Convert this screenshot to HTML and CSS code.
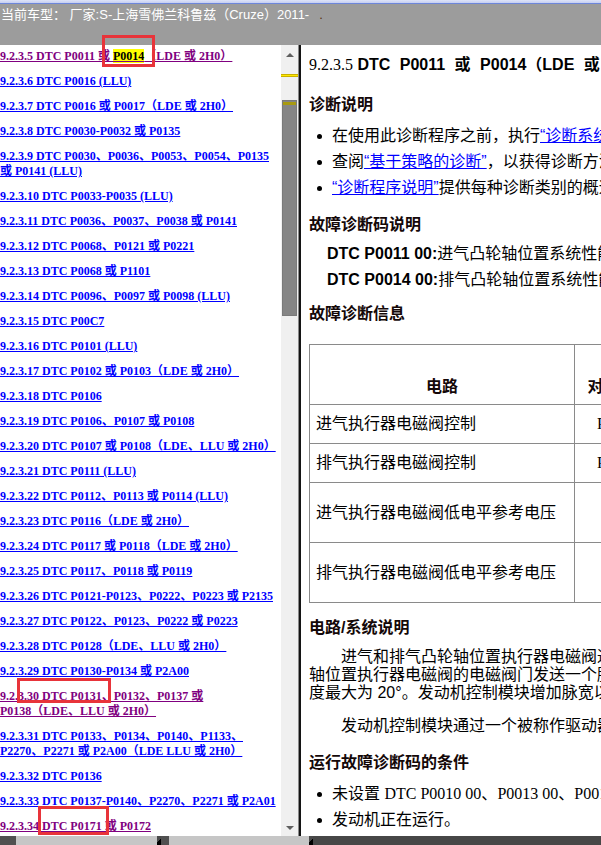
FILE: index.html
```html
<!DOCTYPE html>
<html lang="zh-CN">
<head>
<meta charset="utf-8">
<title>科鲁兹维修手册</title>
<link rel="stylesheet" href="styles.css">
</head>
<body>
<div class="topstrip"></div>
<div class="header">当前车型： 厂家:S-上海雪佛兰科鲁兹（Cruze）2011-<span class="hdot">.</span></div>
<div class="main">
  <div class="left">
    <p class="toc"><a href="#" class="visited">9.2.3.5 DTC P0011 或 <span class="hl">P0014</span>（LDE 或 2H0）</a></p>
    <p class="toc"><a href="#">9.2.3.6 DTC P0016 (LLU)</a></p>
    <p class="toc"><a href="#">9.2.3.7 DTC P0016 或 P0017（LDE 或 2H0）</a></p>
    <p class="toc"><a href="#">9.2.3.8 DTC P0030-P0032 或 P0135</a></p>
    <p class="toc"><a href="#">9.2.3.9 DTC P0030、P0036、P0053、P0054、P0135 或 P0141 (LLU)</a></p>
    <p class="toc"><a href="#">9.2.3.10 DTC P0033-P0035 (LLU)</a></p>
    <p class="toc"><a href="#">9.2.3.11 DTC P0036、P0037、P0038 或 P0141</a></p>
    <p class="toc"><a href="#">9.2.3.12 DTC P0068、P0121 或 P0221</a></p>
    <p class="toc"><a href="#">9.2.3.13 DTC P0068 或 P1101</a></p>
    <p class="toc"><a href="#">9.2.3.14 DTC P0096、P0097 或 P0098 (LLU)</a></p>
    <p class="toc"><a href="#">9.2.3.15 DTC P00C7</a></p>
    <p class="toc"><a href="#">9.2.3.16 DTC P0101 (LLU)</a></p>
    <p class="toc"><a href="#">9.2.3.17 DTC P0102 或 P0103（LDE 或 2H0）</a></p>
    <p class="toc"><a href="#">9.2.3.18 DTC P0106</a></p>
    <p class="toc"><a href="#">9.2.3.19 DTC P0106、P0107 或 P0108</a></p>
    <p class="toc"><a href="#">9.2.3.20 DTC P0107 或 P0108（LDE、LLU 或 2H0）</a></p>
    <p class="toc"><a href="#">9.2.3.21 DTC P0111 (LLU)</a></p>
    <p class="toc"><a href="#">9.2.3.22 DTC P0112、P0113 或 P0114 (LLU)</a></p>
    <p class="toc"><a href="#">9.2.3.23 DTC P0116（LDE 或 2H0）</a></p>
    <p class="toc"><a href="#">9.2.3.24 DTC P0117 或 P0118（LDE 或 2H0）</a></p>
    <p class="toc"><a href="#">9.2.3.25 DTC P0117、P0118 或 P0119</a></p>
    <p class="toc"><a href="#">9.2.3.26 DTC P0121-P0123、P0222、P0223 或 P2135</a></p>
    <p class="toc"><a href="#">9.2.3.27 DTC P0122、P0123、P0222 或 P0223</a></p>
    <p class="toc"><a href="#">9.2.3.28 DTC P0128（LDE、LLU 或 2H0）</a></p>
    <p class="toc"><a href="#">9.2.3.29 DTC P0130-P0134 或 P2A00</a></p>
    <p class="toc"><a href="#" class="visited">9.2.3.30 DTC P0131、P0132、P0137 或 <span class="nw">P0138（LDE、</span>LLU 或 2H0）</a></p>
    <p class="toc"><a href="#">9.2.3.31 DTC P0133、P0134、P0140、P1133、P2270、P2271 或 P2A00（LDE LLU 或 2H0）</a></p>
    <p class="toc"><a href="#">9.2.3.32 DTC P0136</a></p>
    <p class="toc"><a href="#">9.2.3.33 DTC P0137-P0140、P2270、P2271 或 P2A01</a></p>
    <p class="toc"><a href="#" class="visited">9.2.3.34 DTC P0171 或 P0172</a></p>
  </div>
  <div class="vscroll">
    <div class="sb-btn sb-up"><span class="tri-up"></span></div>
    <div class="track">
      <div class="hit"></div>
      <div class="thumb"><div class="thumb-hit"></div></div>
    </div>
    <div class="sb-btn sb-down"><span class="tri-down"></span></div>
  </div>
  <div class="divider"></div>
  <div class="right">
    <div class="doc">
      <div class="title"><span class="num">9.2.3.5</span> <span class="ttl">DTC P0011 或 P0014（LDE 或 2H0）</span></div>
      <h3 class="h h-first">诊断说明</h3>
      <ul class="bul">
        <li>在使用此诊断程序之前，执行<a href="#">“诊断系统检查-车辆”</a>。</li>
        <li>查阅<a href="#">“基于策略的诊断”</a>，以获得诊断方法的概述。</li>
        <li><a href="#">“诊断程序说明”</a>提供每种诊断类别的概述。</li>
      </ul>
      <h3 class="h h-dtc">故障诊断码说明</h3>
      <div class="dtcs">
        <p class="dtc"><b>DTC P0011 00:</b>进气凸轮轴位置系统性能（第 1 排）</p>
        <p class="dtc"><b>DTC P0014 00:</b>排气凸轮轴位置系统性能（第 1 排）</p>
      </div>
      <h3 class="h h-info">故障诊断信息</h3>
      <table class="tbl">
        <colgroup>
          <col class="c1"><col class="c2"><col class="c3"><col class="c4"><col class="c5">
        </colgroup>
        <tr class="r-head">
          <th>电路</th><th>对搭铁短路</th><th>开路/电阻过大</th><th>对电压短路</th><th>信号性能</th>
        </tr>
        <tr class="r-short">
          <td>进气执行器电磁阀控制</td><td class="ctr serif">P0010 00</td><td class="ctr serif">P0010 00</td><td class="ctr serif">P0010 00</td><td class="ctr serif">P0011 00</td>
        </tr>
        <tr class="r-short">
          <td>排气执行器电磁阀控制</td><td class="ctr serif">P0013 00</td><td class="ctr serif">P0013 00</td><td class="ctr serif">P0013 00</td><td class="ctr serif">P0014 00</td>
        </tr>
        <tr class="r-tall">
          <td>进气执行器电磁阀低电平参考电压</td><td class="ctr"></td><td class="ctr serif">P0010 00</td><td class="ctr serif">P0010 00</td><td class="ctr serif">P0011 00</td>
        </tr>
        <tr class="r-tall">
          <td>排气执行器电磁阀低电平参考电压</td><td class="ctr"></td><td class="ctr serif">P0013 00</td><td class="ctr serif">P0013 00</td><td class="ctr serif">P0014 00</td>
        </tr>
      </table>
      <h3 class="h h-sys">电路/系统说明</h3>
      <p class="para p1">进气和排气凸轮轴位置执行器电磁阀通过发动机控制模块控制。发动机控制模块向进气和排气凸轮<br>轴位置执行器电磁阀的电磁阀门发送一个脉宽调制信号，以控制凸轮轴的位置。凸轮轴的调节角<br>度最大为 20°。发动机控制模块增加脉宽以提前或延迟凸轮轴正时。</p>
      <p class="para p2">发动机控制模块通过一个被称作驱动器的内部装置控制电磁阀。</p>
      <h3 class="h h-run">运行故障诊断码的条件</h3>
      <ul class="bul bul2">
        <li>未设置 <span class="serif">DTC P0010 00</span>、<span class="serif">P0013 00</span>、<span class="serif">P0016 00</span> 或 <span class="serif">P0017 00</span>。</li>
        <li>发动机正在运行。</li>
      </ul>
    </div>
  </div>
</div>
<div class="hbar">
  <div class="hb-dark hb-a"></div>
  <div class="hb-light hb-b"></div>
  <div class="hb-grip"></div>
  <div class="hb-dark hb-c"></div>
  <div class="hb-light hb-d"></div>
  <div class="hb-grip"></div>
  <div class="hb-dark hb-e"></div>
</div>
<div class="mark mark1"></div>
<div class="mark mark2"></div>
<div class="mark mark3"></div>
</body>
</html>
```

FILE: styles.css
```css
* { box-sizing: border-box; }
html, body { margin: 0; padding: 0; }
body {
  width: 601px;
  height: 845px;
  overflow: hidden;
  position: relative;
  background: #ffffff;
  font-family: "Liberation Sans", "Noto Sans CJK SC", sans-serif;
}

.topstrip {
  height: 4px;
  background: linear-gradient(#dfe4f8 0, #c7d0f2 70%, #6d86da 75%, #6d86da 100%);
}

.header {
  height: 41px;
  background: #9c9c9c;
  color: #ffffff;
  font-size: 13px;
  line-height: 17px;
  padding: 2px 0 0 1px;
  white-space: nowrap;
}
.hdot { color: #5a3010; margin-left: 10px; }

.main {
  display: flex;
  height: 791px;
}

/* left table of contents */
.left {
  width: 281px;
  flex: none;
  overflow: hidden;
  padding-top: 4px;
}
.toc {
  margin: 0 0 10px;
  font: bold 12px/15px "Liberation Serif", "Noto Sans CJK SC", serif;
}
.toc a { color: #0000ff; text-decoration: underline; }
.toc a.visited { color: #800080; }
.hl { background: #ffff00; color: #000000; }
.nw { white-space: nowrap; }

/* vertical scrollbar */
.vscroll {
  width: 17px;
  flex: none;
  background: #f0f0f0;
  display: flex;
  flex-direction: column;
}
.sb-btn { display: flex; align-items: center; justify-content: center; flex: none; }
.sb-up { height: 20px; }
.sb-down { height: 16px; }
.tri-up {
  width: 0; height: 0;
  border-left: 4px solid transparent;
  border-right: 4px solid transparent;
  border-bottom: 4px solid #5f5f5f;
}
.tri-down {
  width: 0; height: 0;
  border-left: 4px solid transparent;
  border-right: 4px solid transparent;
  border-top: 4px solid #5f5f5f;
}
.track { flex: 1; position: relative; }
.hit {
  position: absolute;
  left: 0; right: 0;
  top: 9px;
  height: 3px;
  background: #ffe800;
  border-top: 1px solid #c8b000;
  border-bottom: 1px solid #c8b000;
}
.thumb {
  position: absolute;
  left: 1px; right: 1px;
  top: 35px;
  height: 216px;
  background: #858585;
  border: 1px solid #7a7a7a;
}
.thumb-hit {
  height: 3px;
  margin-top: 1px;
  background: #a89a10;
}

.divider {
  width: 3px;
  flex: none;
  background: #141414;
  border-left: 1px solid #8a8a8a;
}

/* right document */
.right {
  flex: 1;
  overflow: hidden;
}
.doc {
  width: 1000px;
  padding: 10px 0 0 8px;
  color: #000000;
  font-size: 16px;
}
.title {
  line-height: 20px;
  white-space: nowrap;
}
.num { font-family: "Liberation Serif", "Noto Sans CJK SC", serif; }
.ttl { font-weight: bold; word-spacing: 5px; }

.h {
  margin: 0;
  font-size: 16px;
  font-weight: bold;
  line-height: 20px;
  color: #140808;
}
.h-first { margin-top: 20px; }
.h-dtc { margin-top: 14px; }
.h-info { margin-top: 11px; }
.h-sys { margin-top: 15px; }
.h-run { margin-top: 18px; }

.bul {
  list-style: none;
  margin: 8px 0 0;
  padding: 0;
}
.bul li {
  position: relative;
  padding-left: 23px;
  line-height: 26px;
  white-space: nowrap;
}
.bul li::before {
  content: "";
  position: absolute;
  left: 8px;
  top: 11px;
  width: 5px;
  height: 5px;
  border-radius: 50%;
  background: #000000;
}
.bul a { color: #0000ff; text-decoration: underline; }

.dtcs { margin-top: 6px; }
.dtc {
  margin: 0;
  padding-left: 18px;
  line-height: 26px;
  white-space: nowrap;
}

.tbl {
  margin-top: 20px;
  border-collapse: collapse;
  table-layout: fixed;
  width: 741px;
}
.c1 { width: 265px; }
.c2 { width: 106px; }
.c3 { width: 130px; }
.c4 { width: 120px; }
.c5 { width: 120px; }
.tbl th, .tbl td {
  border: 1px solid #8a8a8a;
  padding: 0 6px;
  font-size: 16px;
  line-height: 22px;
  text-align: left;
  vertical-align: middle;
  white-space: nowrap;
  overflow: hidden;
}
.tbl th {
  font-weight: bold;
  text-align: center;
  vertical-align: bottom;
  padding-bottom: 6px;
  color: #140808;
}
.tbl .ctr { text-align: center; }
.r-head { height: 60px; }
.r-short { height: 39px; }
.r-tall { height: 60px; }
.serif { font-family: "Liberation Serif", "Noto Sans CJK SC", serif; }

.para {
  margin: 10px 0 0;
  line-height: 18px;
  text-indent: 32px;
  white-space: nowrap;
}
.p2 { margin-top: 15px; }
.bul2 { margin-top: 8px; }

/* bottom horizontal bar */
.hbar {
  height: 9px;
  display: flex;
  background: #4a4a4a;
}
.hb-dark { background: #505050; }
.hb-light { background: #c6c6c6; }
.hb-a { width: 16px; }
.hb-b { width: 141px; }
.hb-c { width: 8px; }
.hb-d { width: 140px; }
.hb-e { flex: 1; background: #474747; }
.hb-grip {
  width: 4px;
  background: linear-gradient(135deg, transparent 50%, #000000 50%);
}

/* annotation boxes */
.mark {
  position: absolute;
  border: 3px solid #e8343a;
}
.mark1 { left: 102px; top: 35px; width: 53px; height: 32px; }
.mark2 { left: 17px; top: 678px; width: 94px; height: 25px; }
.mark3 { left: 38px; top: 806px; width: 71px; height: 29px; }
```
